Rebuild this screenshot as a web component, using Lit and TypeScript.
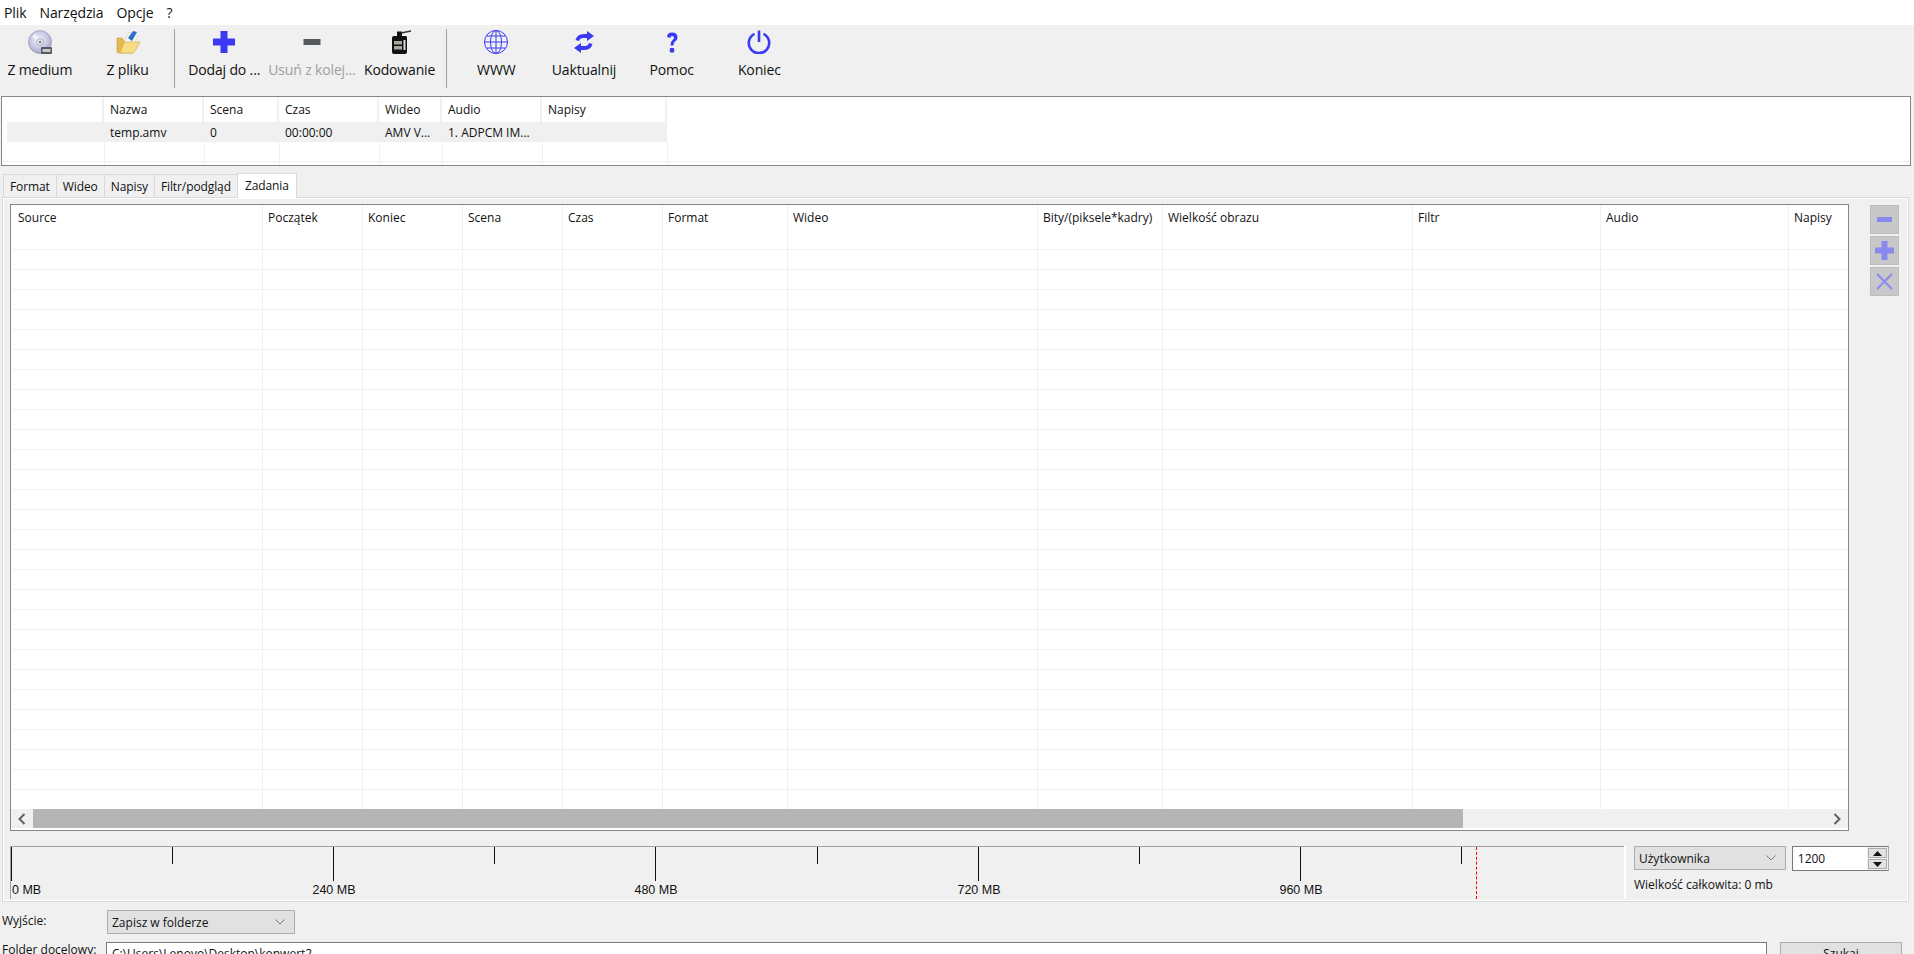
import { LitElement, html, css, svg } from 'lit';
import { customElement } from 'lit/decorators.js';

const BLUE = '#3a3af5';

const ICONS: Record<string, unknown> = {
  dvd: svg`
    <defs><radialGradient id="d" cx="45%" cy="40%" r="60%"><stop offset="0" stop-color="#f4f4fb"/><stop offset="0.6" stop-color="#c9c9e6"/><stop offset="1" stop-color="#a9a9c6"/></radialGradient></defs>
    <circle cx="12" cy="12" r="11.5" fill="url(#d)" stroke="#8e8ea6" stroke-width="0.6"/>
    <path d="M4 7 L12 12 L7 3.5Z" fill="#fff" opacity=".7"/>
    <circle cx="12" cy="12" r="3.4" fill="#e7e7ee" stroke="#8c8ca0" stroke-width=".6"/>
    <circle cx="12" cy="12" r="1.2" fill="#77778c"/>
    <rect x="13" y="17" width="11" height="7" rx="1" fill="#55595c"/>
    <rect x="14.5" y="19" width="8" height="3" fill="#c6c9c9"/>`,
  folder: svg`
    <path d="M1 8 L1 21 Q1 23 3 23 L17 23 L18 11 L8 11 L6 8Z" fill="#e5b94e" stroke="#c2973a" stroke-width=".6"/>
    <path d="M8 12 L13 2 L22 6 L18 14Z" fill="#f7f7f2" stroke="#b9b9b9" stroke-width=".4"/>
    <path d="M12 8 L17 1 L21 2 L16 11Z" fill="#2f6fc6"/>
    <path d="M4 23 L8 12 L24 12 L19 21 Q18 23 16 23Z" fill="#f8dd85" stroke="#c9a443" stroke-width=".6"/>`,
  plus: svg`<path d="M8.5 1h7v7.500h7.500v7h-7.500v7.500h-7v-7.500h-7.500v-7h7.500z" fill="${BLUE}"/>`,
  minus: svg`<rect x="0.500" y="9" width="17" height="6" fill="#55595c"/>`,
  film: svg`
    <path d="M4 8 Q4 6 6 6 L18 6 Q19 6 19 8 L19 22 Q19 24 17 24 L6 24 Q4 24 4 22Z" fill="#111"/>
    <rect x="9" y="1.500" width="5" height="5" fill="#111"/>
    <path d="M13 3 L23 1" stroke="#333" stroke-width="1.500"/>
    <rect x="6" y="11" width="8" height="3.500" fill="#a8a8a0"/>
    <rect x="6" y="16" width="8" height="3.500" fill="#a8a8a0"/>
    <rect x="15.500" y="10" width="2" height="10" fill="#ddd"/>`,
  globe: svg`
    <g fill="none" stroke="${BLUE}" stroke-width="1">
      <circle cx="12" cy="12" r="11.500"/>
      <ellipse cx="12" cy="12" rx="5.500" ry="11.500"/>
      <path d="M12 .5v23M.5 12h23M2.500 6h19M2.500 18h19"/>
    </g>`,
  sync: svg`
    <g fill="${BLUE}">
      <path d="M3.500 10 Q5 4 12 4 L15 4 L15 1 L22 6 L15 11 L15 8 L11 8 Q8 8 7 11Z"/>
      <path d="M20.500 14 Q19 20 12 20 L9 20 L9 23 L2 18 L9 13 L9 16 L13 16 Q16 16 17 13Z"/>
    </g>`,
  help: svg`
    <path d="M7 7 Q7 2.500 12 2.500 Q17.500 2.500 17.500 7.500 Q17.500 10 15 11.500 Q13.500 12.500 13.500 15.500 L10.500 15.500 Q10.500 11.500 12.500 10 Q14 9 14 7.500 Q14 6 12 6 Q10.500 6 10.500 8Z" fill="${BLUE}"/>
    <rect x="9.800" y="18" width="4.400" height="4.400" rx="1" fill="${BLUE}"/>`,
  power: svg`
    <g fill="none" stroke="${BLUE}" stroke-width="2.600">
      <path d="M7.500 3.800 A10.200 10.200 0 1 0 16.500 3.800"/>
      <path d="M12 .5 V12"/>
    </g>`,
};

interface Tool { label: string; icon: string; size: number; off?: boolean; }

const GROUPS: Tool[][] = [
  [{ label: 'Z medium', icon: 'dvd', size: 24 }, { label: 'Z pliku', icon: 'folder', size: 24 }],
  [
    { label: 'Dodaj do ...', icon: 'plus', size: 24 },
    { label: 'Usuń z kolej...', icon: 'minus', size: 18, off: true },
    { label: 'Kodowanie', icon: 'film', size: 24 },
  ],
  [
    { label: 'WWW', icon: 'globe', size: 24 },
    { label: 'Uaktualnij', icon: 'sync', size: 24 },
    { label: 'Pomoc', icon: 'help', size: 24 },
    { label: 'Koniec', icon: 'power', size: 24 },
  ],
];

const SOURCE_COLS: [string, number][] = [
  ['', 102], ['Nazwa', 100], ['Scena', 75], ['Czas', 100], ['Wideo', 63], ['Audio', 100], ['Napisy', 125],
];
const SOURCE_ROW = ['', 'temp.amv', '0', '00:00:00', 'AMV V...', '1. ADPCM IM...', ''];

const JOB_COLS: [string, number][] = [
  ['Source', 251], ['Początek', 100], ['Koniec', 100], ['Scena', 100], ['Czas', 100], ['Format', 125],
  ['Wideo', 125], ['Bity/(piksele*kadry)', 250], ['Wielkość obrazu', 125], ['Filtr', 250], ['Audio', 188], ['Napisy', 188],
];

// szerokosci kolumn jak w QTableView: Wideo szersze, Bity wezsze
JOB_COLS[6][1] = 250;
JOB_COLS[7][1] = 125;
JOB_COLS[8][1] = 250;
JOB_COLS[9][1] = 188;

const TABS = ['Format', 'Wideo', 'Napisy', 'Filtr/podgląd', 'Zadania'];
const MAJOR = ['0 MB', '240 MB', '480 MB', '720 MB', '960 MB'];

@customElement('app-root')
export class AppRoot extends LitElement {
  static styles = css`
    :host {
      display: block;
      width: 1914px;
      height: 954px;
      overflow: hidden;
      background: #f0f0f0;
      font-family: 'Open Sans', 'Noto Sans', sans-serif;
      font-size: 12px;
      color: #111;
    }
    .menu {
      height: 25px;
      background: #fff;
      display: flex;
      align-items: center;
      gap: 13px;
      padding-left: 4px;
      font-size: 14px;
      letter-spacing: -0.1px;
    }
    .toolbar {
      height: 71px;
      display: flex;
      align-items: flex-start;
      padding-top: 4px;
      box-sizing: border-box;
    }
    .group { display: flex; }
    .group:first-child { margin-left: -4px; }
    .sep {
      width: 1px;
      height: 59px;
      background: #a0a0a0;
      margin: 0 5px 0 3px;
    }
    .tool {
      width: 87.700px;
      display: flex;
      flex-direction: column;
      align-items: center;
      font-size: 14px;
      letter-spacing: -0.15px;
      white-space: nowrap;
    }
    .tool.off { color: #a0a0a0; }
    .glyph {
      height: 26px;
      margin-bottom: 5px;
      display: flex;
      align-items: center;
      justify-content: center;
    }
    .sources {
      margin: 0 3px 0 1px;
      height: 70px;
      box-sizing: border-box;
      border: 1px solid #828790;
      background: #fff;
      overflow: hidden;
    }
    .srow { display: flex; }
    .srow.head { height: 25px; margin-left: 0; }
    .srow.head .c {
      border-right: 2px solid #f0f0f0;
      display: flex;
      align-items: center;
      padding-left: 6px;
    }
    .srow.data {
      height: 20px;
      margin-left: 5px;
      background: #f0f0f0;
      width: 660px;
    }
    .srow.data .c {
      display: flex;
      align-items: center;
      padding-left: 6px;
    }
    .srow.data .c:first-child { margin-left: -5px; }
    .srow .c { box-sizing: border-box; flex: none; white-space: nowrap; overflow: hidden; }
    .srow.blank {
      height: 20px;
      box-sizing: border-box;
      border-bottom: 1px solid #f0f0f0;
      margin-left: 1px;
    }
    .srow.blank .c { border-right: 1px solid #f0f0f0; height: 100%; }
    .tabs {
      display: flex;
      align-items: flex-end;
      height: 31px;
      padding-left: 3px;
      box-sizing: border-box;
    }
    .tab {
      height: 23px;
      box-sizing: border-box;
      padding: 0 6px;
      border: 1px solid #d9d9d9;
      border-bottom: none;
      border-right: none;
      display: flex;
      align-items: center;
      letter-spacing: -0.1px;
    }
    .tab.on {
      height: 25px;
      background: #fff;
      border-right: 1px solid #d9d9d9;
      padding: 0 7px 2px;
      margin-bottom: -1px;
      position: relative;
    }
    .pane {
      margin: 0 5px 0 2px;
      height: 705px;
      box-sizing: border-box;
      border: 1px solid #d9d9d9;
      border-width: 1px 1px 1px 1px;
      box-shadow: inset 0 0 0 1px #fff;
      padding: 6px 5px 2px 7px;
      display: flex;
      flex-direction: column;
    }
    .upper { display: flex; height: 627px; }
    .jobs {
      width: 1839px;
      box-sizing: border-box;
      border: 1px solid #828790;
      background: #fff;
      display: flex;
      flex-direction: column;
      overflow: hidden;
    }
    .grid { flex: 1; overflow: hidden; padding-left: 1px; }
    .jhead { display: flex; height: 25px; }
    .jhead .c {
      flex: none;
      box-sizing: border-box;
      padding-left: 5px;
      border-right: 1px solid #f0f0f0;
      display: flex;
      align-items: center;
      white-space: nowrap;
      overflow: hidden;
    }
    .jhead .c:first-child { padding-left: 6px; }
    .jrow { display: flex; height: 20px; box-sizing: border-box; border-bottom: 1px solid #f0f0f0; }
    .jrow div { flex: none; box-sizing: border-box; border-right: 1px solid #f0f0f0; height: 100%; }
    .hbar {
      height: 19px;
      margin-bottom: 2px;
      background: #f0f0f0;
      display: flex;
      align-items: center;
      flex: none;
    }
    .hbar svg { flex: none; }
    .arrow { width: 22px; display: flex; justify-content: center; flex: none; }
    .thumb { width: 1430px; height: 100%; background: #b5b5b5; flex: none; }
    .track { flex: 1; }
    .side {
      margin-left: 21px;
      display: flex;
      flex-direction: column;
      gap: 2px;
      padding-top: 1px;
    }
    .side button {
      width: 29px;
      height: 29px;
      padding: 0;
      box-sizing: border-box;
      border: 1px solid #bcbcbc;
      background: #c8c8c8;
      display: flex;
      align-items: center;
      justify-content: center;
    }
    .lower { display: flex; height: 55px; margin-top: 15px; }
    .scale {
      width: 1614px;
      box-sizing: border-box;
      border-top: 1px solid #a0a0a0;
      border-left: 1px solid #a0a0a0;
      position: relative;
      font-family: 'Liberation Sans', Arial, sans-serif;
      font-size: 12.500px;
    }
    .tick { position: absolute; top: 0; width: 1px; background: #111; }
    .tick.big { height: 34px; }
    .tick.small { height: 17px; }
    .mark { position: absolute; top: 35px; line-height: 16px; transform: translateX(-50%); white-space: nowrap; }
    .mark.first { transform: none; left: 1px; }
    .limit { position: absolute; top: 0; bottom: 0; left: 1465px; border-left: 1px dashed #f00; }
    .size {
      margin-left: 8px;
      padding-left: 1px;
      width: 265px;
      border-left: 2px solid #fff;
      padding-left: 8px;
      margin-left: 0;
      box-sizing: border-box;
    }
    .sizerow { display: flex; gap: 6px; height: 25px; }
    .combo {
      box-sizing: border-box;
      height: 24px;
      background: #e1e1e1;
      border: 1px solid #adadad;
      display: flex;
      align-items: center;
      justify-content: space-between;
      padding: 0 8px 0 4px;
    }
    .spin {
      width: 100px;
      height: 25px;
      box-sizing: border-box;
      border: 1px solid #7a7a7a;
      border-right: 1px solid #adadad;
      background: #fff;
      display: flex;
      align-items: center;
      justify-content: space-between;
      padding-left: 5px;
    }
    .btns {
      width: 21px;
      height: 23px;
      background: #f0f0f0;
      display: flex;
      flex-direction: column;
      gap: 1px;
      padding: 1px;
      box-sizing: border-box;
    }
    .btns span {
      flex: 1;
      background: #e1e1e1;
      border: 1px solid #adadad;
      display: flex;
      align-items: center;
      justify-content: center;
    }
    .total { margin-top: 6px; line-height: 16px; }
    .form {
      display: grid;
      grid-template-columns: 105px 188px;
      align-items: center;
      padding-left: 2px;
      margin-top: 8px;
    }
    .form label { padding-bottom: 4px; }
    .folder {
      display: flex;
      align-items: flex-start;
      padding-left: 2px;
      margin-top: 8px;
    }
    .folder label { width: 104px; flex: none; padding-top: 0; line-height: 16px; }
    .path {
      width: 1661px;
      height: 30px;
      box-sizing: border-box;
      border: 1px solid #7a7a7a;
      background: #fff;
      padding: 2px 5px;
      flex: none;
    }
    .find {
      margin-left: 13px;
      width: 122px;
      height: 30px;
      box-sizing: border-box;
      background: #e1e1e1;
      border: 1px solid #adadad;
      text-align: center;
      padding-top: 2px;
      flex: none;
    }
  `;

  private chevron() {
    return html`<svg width="12" height="8" viewBox="0 0 12 8"><path d="M1.500 1.500 L6 6 L10.500 1.500" fill="none" stroke="#777" stroke-width="1"/></svg>`;
  }

  private tool(t: Tool) {
    return html`<div class="tool ${t.off ? 'off' : ''}">
      <div class="glyph"><svg width=${t.size} height="24" viewBox="0 0 ${t.size} 24">${ICONS[t.icon]}</svg></div>
      <span>${t.label}</span>
    </div>`;
  }

  private scale() {
    const step = 322.2;
    const ticks = [];
    for (let i = 0; i < 10; i++) {
      const x = Math.round((step / 2) * i);
      ticks.push(html`<div class="tick ${i % 2 ? 'small' : 'big'}" style="left:${x}px"></div>`);
    }
    const marks = MAJOR.map((m, i) =>
      html`<div class="mark ${i ? '' : 'first'}" style=${i ? `left:${Math.round(step * i) + 1}px` : ''}>${m}</div>`);
    return html`<div class="scale">${ticks}${marks}<div class="limit"></div></div>`;
  }

  render() {
    const rows = Array.from({ length: 29 });
    return html`
      <div class="menu"><span>Plik</span><span>Narzędzia</span><span>Opcje</span><span>?</span></div>

      <div class="toolbar">
        ${GROUPS.map((g, i) => html`
          ${i ? html`<div class="sep"></div>` : ''}
          <div class="group">${g.map((t) => this.tool(t))}</div>
        `)}
      </div>

      <div class="sources">
        <div class="srow head">
          ${SOURCE_COLS.map(([n, w]) => html`<div class="c" style="width:${w}px">${n}</div>`)}
        </div>
        <div class="srow data">
          ${SOURCE_COLS.map(([, w], i) => html`<div class="c" style="width:${w}px">${SOURCE_ROW[i]}</div>`)}
        </div>
        <div class="srow blank">
          ${SOURCE_COLS.map(([, w]) => html`<div class="c" style="width:${w}px"></div>`)}
        </div>
        <div class="srow blank">
          ${SOURCE_COLS.map(([, w]) => html`<div class="c" style="width:${w}px"></div>`)}
        </div>
      </div>

      <div class="tabs">
        ${TABS.map((t, i) => html`<div class="tab ${i === 4 ? 'on' : ''}">${t}</div>`)}
      </div>

      <div class="pane">
        <div class="upper">
          <div class="jobs">
            <div class="grid">
              <div class="jhead">
                ${JOB_COLS.map(([n, w]) => html`<div class="c" style="width:${w}px">${n}</div>`)}
              </div>
              ${rows.map(() => html`<div class="jrow">
                ${JOB_COLS.map(([, w]) => html`<div style="width:${w}px"></div>`)}
              </div>`)}
            </div>
            <div class="hbar">
              <div class="arrow"><svg width="8" height="12" viewBox="0 0 8 12"><path d="M6.500 1 L1.500 6 L6.500 11" fill="none" stroke="#606060" stroke-width="2"/></svg></div>
              <div class="thumb"></div>
              <div class="track"></div>
              <div class="arrow"><svg width="8" height="12" viewBox="0 0 8 12"><path d="M1.500 1 L6.500 6 L1.500 11" fill="none" stroke="#606060" stroke-width="2"/></svg></div>
            </div>
          </div>
          <div class="side">
            <button><svg width="15" height="5"><rect width="15" height="5" fill="#8a8aee"/></svg></button>
            <button><svg width="19" height="19" viewBox="0 0 19 19"><path d="M6.500 0h6v6.500h6.500v6h-6.500v6.500h-6v-6.500h-6.500v-6h6.500z" fill="#8a8aee"/></svg></button>
            <button><svg width="17" height="17" viewBox="0 0 17 17"><path d="M1 1 L16 16 M16 1 L1 16" stroke="#8a8aee" stroke-width="2"/></svg></button>
          </div>
        </div>
        <div class="lower">
          ${this.scale()}
          <div class="size">
            <div class="sizerow">
              <div class="combo" style="width:156px"><span>Użytkownika</span>${this.chevron()}</div>
              <div class="spin">
                <span>1200</span>
                <div class="btns">
                  <span><svg width="9" height="5"><path d="M0 5 L4.500 0 L9 5Z" fill="#111"/></svg></span>
                  <span><svg width="9" height="5"><path d="M0 0 L4.500 5 L9 0Z" fill="#111"/></svg></span>
                </div>
              </div>
            </div>
            <div class="total">Wielkość całkowita: 0 mb</div>
          </div>
        </div>
      </div>

      <div class="form">
        <label>Wyjście:</label>
        <div class="combo" style="width:188px"><span>Zapisz w folderze</span>${this.chevron()}</div>
      </div>
      <div class="folder">
        <label>Folder docelowy:</label>
        <div class="path">C:\\Users\\Lenovo\\Desktop\\konwert2</div>
        <div class="find">Szukaj</div>
      </div>
    `;
  }
}
